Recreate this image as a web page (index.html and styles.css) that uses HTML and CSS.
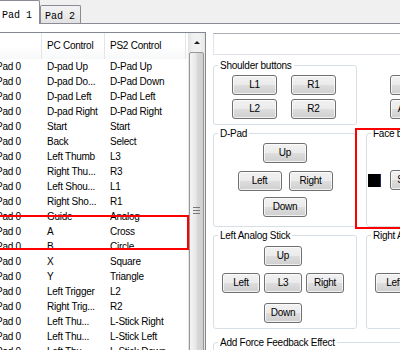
FILE: index.html
```html
<!DOCTYPE html>
<html lang="en">
<head>
  <meta charset="UTF-8">
  <title>Pad Settings</title>
  <link rel="stylesheet" href="styles.css">
</head>
<body>

<div class="tabs">
  <div class="tab active">Pad 1</div>
  <div class="tab">Pad 2</div>
</div>

<div class="page">
  <div class="list">
    <div class="list-body">
      <div class="list-head">
        <span></span>
        <span>PC Control</span>
        <span>PS2 Control</span>
      </div>
      <div class="row"><span>Pad 0</span><span>D-pad Up</span><span>D-Pad Up</span></div>
      <div class="row"><span>Pad 0</span><span>D-pad Do...</span><span>D-Pad Down</span></div>
      <div class="row"><span>Pad 0</span><span>D-pad Left</span><span>D-Pad Left</span></div>
      <div class="row"><span>Pad 0</span><span>D-pad Right</span><span>D-Pad Right</span></div>
      <div class="row"><span>Pad 0</span><span>Start</span><span>Start</span></div>
      <div class="row"><span>Pad 0</span><span>Back</span><span>Select</span></div>
      <div class="row"><span>Pad 0</span><span>Left Thumb</span><span>L3</span></div>
      <div class="row"><span>Pad 0</span><span>Right Thu...</span><span>R3</span></div>
      <div class="row"><span>Pad 0</span><span>Left Shou...</span><span>L1</span></div>
      <div class="row"><span>Pad 0</span><span>Right Sho...</span><span>R1</span></div>
      <div class="row"><span>Pad 0</span><span>Guide</span><span>Analog</span></div>
      <div class="row"><span>Pad 0</span><span>A</span><span>Cross</span></div>
      <div class="row"><span>Pad 0</span><span>B</span><span>Circle</span></div>
      <div class="row"><span>Pad 0</span><span>X</span><span>Square</span></div>
      <div class="row"><span>Pad 0</span><span>Y</span><span>Triangle</span></div>
      <div class="row"><span>Pad 0</span><span>Left Trigger</span><span>L2</span></div>
      <div class="row"><span>Pad 0</span><span>Right Trig...</span><span>R2</span></div>
      <div class="row"><span>Pad 0</span><span>Left Thu...</span><span>L-Stick Right</span></div>
      <div class="row"><span>Pad 0</span><span>Left Thu...</span><span>L-Stick Left</span></div>
      <div class="row"><span>Pad 0</span><span>Left Thu...</span><span>L-Stick Down</span></div>
    </div>
    <div class="scrollbar">
      <div class="scroll-up"></div>
      <div class="scroll-thumb"><span class="grip"></span></div>
    </div>
  </div>

  <div class="panel">
    <input class="name-field" type="text">
    <div class="groups">
      <fieldset class="group">
        <legend>Shoulder buttons</legend>
        <div class="pair-grid">
          <button class="btn">L1</button>
          <button class="btn">R1</button>
          <button class="btn">L2</button>
          <button class="btn">R2</button>
        </div>
      </fieldset>

      <div class="misc">
        <button class="btn">Start</button>
        <button class="btn">Analog</button>
      </div>

      <fieldset class="group">
        <legend>D-Pad</legend>
        <div class="dpad">
          <button class="btn">Up</button>
          <div class="dpad-mid">
            <button class="btn">Left</button>
            <button class="btn">Right</button>
          </div>
          <button class="btn dpad-down">Down</button>
        </div>
      </fieldset>

      <fieldset class="group">
        <legend>Face buttons</legend>
        <div class="face">
          <span class="swatch"></span>
          <button class="btn">Square</button>
        </div>
      </fieldset>

      <fieldset class="group">
        <legend>Left Analog Stick</legend>
        <div class="stick">
          <button class="btn stick-up">Up</button>
          <button class="btn">Left</button>
          <button class="btn">L3</button>
          <button class="btn">Right</button>
          <button class="btn stick-down">Down</button>
        </div>
      </fieldset>

      <fieldset class="group">
        <legend>Right Analog Stick</legend>
        <div class="stick">
          <button class="btn stick-up">Up</button>
          <button class="btn">Left</button>
          <button class="btn">R3</button>
          <button class="btn">Right</button>
          <button class="btn stick-down">Down</button>
        </div>
      </fieldset>

      <fieldset class="group group-wide">
        <legend>Add Force Feedback Effect</legend>
      </fieldset>
    </div>
  </div>
</div>

<div class="mark mark-tab"></div>
<div class="mark mark-rows"></div>
<div class="mark mark-face"></div>

</body>
</html>
```

FILE: styles.css
```css
body{
  margin: 0;
  width: 400px;
  height: 350px;
  overflow: hidden;
  position: relative;
  background-color: #f0f0f0;
  font-family: 'Liberation Sans', Arial, sans-serif;
  font-size: 10px;
  letter-spacing: -0.25px;
  color: #000;
}

/* tabs */
.tabs{
  display: flex;
  align-items: flex-end;
  height: 23px;
  border-bottom: 1px solid #898c95;
}
.tab{
  font-family: 'Liberation Mono', monospace;
  letter-spacing: 0;
  box-sizing: border-box;
  width: 41px;
  height: 18px;
  padding: 4px 0 0 4px;
  line-height: 14px;
  border: 1px solid #898c95;
  border-bottom: 0;
  border-radius: 2px 2px 0 0;
  background: linear-gradient(#f3f3f3, #e2e2e2);
}
.tab.active{
  position: relative;
  z-index: 1;
  width: 42px;
  height: 24px;
  margin: 0 0 -1px -2px;
  padding: 8px 0 0 3px;
  background: #fff;
}

/* tab page */
.page{
  display: flex;
  box-sizing: border-box;
  height: 326px;
  padding-top: 8px;
  background: #fff;
  overflow: hidden;
}

/* list view */
.list{
  flex: none;
  display: flex;
  width: 216px;
  height: 400px;
  margin-left: -10px;
  box-sizing: border-box;
  border: 1px solid #828790;
}
.list-body{
  width: 197px;
}
.list-head,
.row{
  display: grid;
  grid-template-columns: 51px 63px 81px;
}
.list-head{
  height: 26px;
  line-height: 25px;
  background: linear-gradient(#fff 50%, #f7f8f9);
}
.list-head span{
  border-right: 1px solid #e3e5e8;
  padding-left: 5px;
}
.row{
  height: 15px;
  line-height: 15px;
}
.row span{
  padding-left: 5px;
  white-space: nowrap;
  overflow: hidden;
}

.scrollbar{
  width: 17px;
  display: flex;
  flex-direction: column;
  background: linear-gradient(to right, #e3e3e3, #f1f1f1 30%, #f1f1f1 70%, #e7e7e7);
}
.scroll-up{
  height: 19px;
  display: flex;
  align-items: center;
  justify-content: center;
}
.scroll-up::before{
  content: '';
  border-left: 3px solid transparent;
  border-right: 3px solid transparent;
  border-bottom: 3px solid #1b1b1b;
}
.scroll-thumb{
  height: 316px;
  margin: 0 1px;
  box-sizing: border-box;
  border: 1px solid #979797;
  border-radius: 2px;
  background: linear-gradient(to right, #f4f4f4, #e8e8e8 45%, #d9d9d9 55%, #cfcfcf);
  display: flex;
  align-items: center;
  justify-content: center;
}
.grip{
  width: 7px;
  height: 5px;
  border-top: 1px solid #777;
  border-bottom: 1px solid #777;
  background: linear-gradient(transparent 2px, #777 2px, #777 3px, transparent 3px);
}

/* right side */
.panel{
  flex: none;
  width: 300px;
  padding: 1px 0 0 7px;
}
.name-field{
  display: block;
  box-sizing: border-box;
  width: 260px;
  height: 22px;
  margin: 0;
  border: 1px solid #e2e3ea;
  border-top-color: #abadb3;
  background: #fff;
}
.groups{
  display: grid;
  grid-template-columns: 144px 144px;
  grid-template-rows: 66px 100px 100px 40px;
  column-gap: 9px;
  row-gap: 2px;
  margin-top: 4px;
}
.group{
  margin: 0;
  padding: 0;
  min-width: 0;
  box-sizing: border-box;
  border: 1px solid #d5dfe5;
  border-radius: 3px;
}
.group legend{
  margin-left: 4px;
  padding: 0 2px;
  line-height: 13px;
}
.group-wide{
  grid-column: 1 / 3;
  margin-top: 5px;
}

.btn{
  box-sizing: border-box;
  width: 44px;
  height: 20px;
  padding: 0;
  font-family: inherit;
  font-size: 10px;
  letter-spacing: inherit;
  line-height: 18px;
  color: #000;
  border: 1px solid #707070;
  border-radius: 3px;
  background: linear-gradient(#f2f2f2 0%, #ebebeb 48%, #dddddd 52%, #cfcfcf 100%);
  box-shadow: inset 0 0 0 1px rgba(255, 255, 255, 0.7);
}

.pair-grid{
  display: grid;
  grid-template-columns: 45px 45px;
  column-gap: 14px;
  row-gap: 4px;
  padding: 3px 0 0 18px;
}
.pair-grid .btn{
  width: 45px;
}

.misc{
  display: flex;
  flex-direction: column;
  gap: 4px;
  padding: 16px 0 0 24px;
}
.misc .btn{
  width: 45px;
}

.dpad{
  display: flex;
  flex-direction: column;
  align-items: center;
  padding-top: 3px;
}
.dpad-mid{
  display: flex;
  gap: 7px;
  margin: 8px 0 6px;
}

.face{
  display: flex;
  align-items: center;
  gap: 9px;
  padding: 30px 0 0 1px;
}
.swatch{
  width: 12px;
  height: 13px;
  background: #000;
  border-right: 1px solid #1c2c66;
}
.face .btn{
  width: 45px;
}

.stick{
  display: grid;
  grid-template-columns: 38px 38px 38px;
  column-gap: 4px;
  padding: 4px 0 0 8px;
}
.stick .btn{
  width: 38px;
  grid-row: 2;
}
.stick .stick-up{
  grid-row: 1;
  grid-column: 2;
  margin-bottom: 7px;
}
.stick .stick-down{
  grid-row: 3;
  grid-column: 2;
  margin-top: 10px;
}

/* red annotation boxes */
.mark{
  position: absolute;
  box-sizing: border-box;
  border: 2px solid #f00;
}
.mark-tab{
  left: 0;
  top: 0;
  width: 34px;
  height: 24px;
}
.mark-rows{
  left: -10px;
  top: 215px;
  width: 199px;
  height: 35px;
}
.mark-face{
  left: 355px;
  top: 128px;
  width: 100px;
  height: 101px;
}
```
